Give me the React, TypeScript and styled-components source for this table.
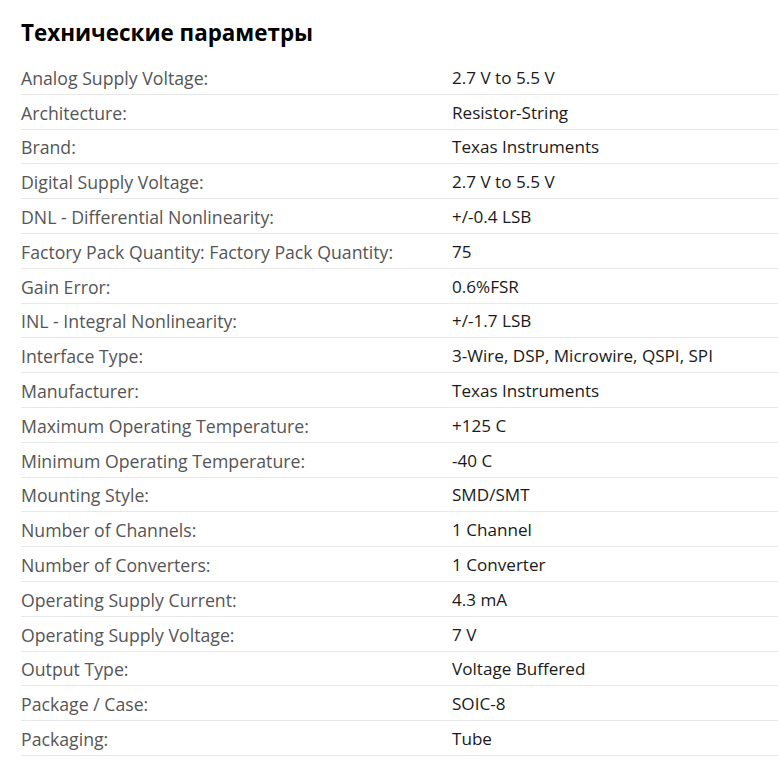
import styled, { createGlobalStyle } from "styled-components";

const GlobalStyle = createGlobalStyle`
    html, body {
        margin: 0;
        padding: 0;
        background: #fff;
    }
    body {
        font-family: "Open Sans", "Liberation Sans", sans-serif;
        overflow: hidden;
    }
`;

const Section = styled.section`
    padding: 17px 0 0 21px;
`;

const Title = styled.h2`
    margin: 0 0 11px;
    font-size: 22.4px;
    line-height: 32px;
    font-weight: 700;
    color: #000;
`;

const SpecList = styled.dl`
    margin: 0;
`;

const SpecRow = styled.div`
    display: grid;
    grid-template-columns: 431px 1fr;
    height: 34.8px;
    box-sizing: border-box;
    align-items: center;
    border-bottom: 1px solid #e8e8e8;
    line-height: 24px;
    padding-top: 2px;
`;

const Label = styled.dt`
    color: #555;
    font-size: 17.7px;
    margin: 0;
    white-space: nowrap;
`;

const Value = styled.dd`
    color: #1a1a1a;
    font-size: 17.1px;
    margin: 0;
    white-space: nowrap;
`;

const specs: [string, string][] = [
    ["Analog Supply Voltage:", "2.7 V to 5.5 V"],
    ["Architecture:", "Resistor-String"],
    ["Brand:", "Texas Instruments"],
    ["Digital Supply Voltage:", "2.7 V to 5.5 V"],
    ["DNL - Differential Nonlinearity:", "+/-0.4 LSB"],
    ["Factory Pack Quantity: Factory Pack Quantity:", "75"],
    ["Gain Error:", "0.6%FSR"],
    ["INL - Integral Nonlinearity:", "+/-1.7 LSB"],
    ["Interface Type:", "3-Wire, DSP, Microwire, QSPI, SPI"],
    ["Manufacturer:", "Texas Instruments"],
    ["Maximum Operating Temperature:", "+125 C"],
    ["Minimum Operating Temperature:", "-40 C"],
    ["Mounting Style:", "SMD/SMT"],
    ["Number of Channels:", "1 Channel"],
    ["Number of Converters:", "1 Converter"],
    ["Operating Supply Current:", "4.3 mA"],
    ["Operating Supply Voltage:", "7 V"],
    ["Output Type:", "Voltage Buffered"],
    ["Package / Case:", "SOIC-8"],
    ["Packaging:", "Tube"],
];

function App() {
    return (
        <>
            <GlobalStyle />
            <Section>
                <Title>Технические параметры</Title>
                <SpecList>
                    {specs.map(([label, value]) => (
                        <SpecRow key={label}>
                            <Label>{label}</Label>
                            <Value>{value}</Value>
                        </SpecRow>
                    ))}
                </SpecList>
            </Section>
        </>
    );
}

export default App;
